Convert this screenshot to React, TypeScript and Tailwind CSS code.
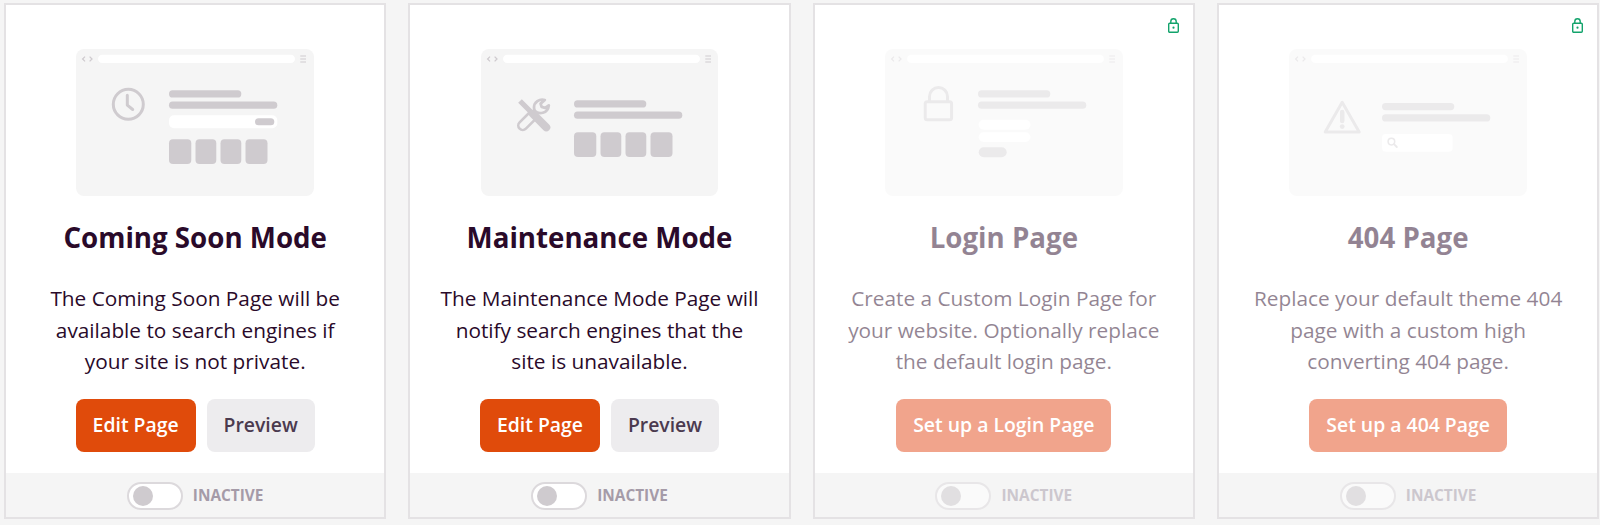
import type { ReactNode } from "react";

const DARK = "#cfcbcf";

function Chrome() {
  return (
    <>
      <rect x="22" y="5.7" width="197" height="8.4" rx="4.2" fill="#fff" />
      <path d="M9 7.6 6.6 10l2.4 2.4M13.6 7.6 16 10l-2.4 2.4" fill="none" stroke={DARK} strokeWidth="1.3" />
      <path d="M224.3 7h5.7M224.3 10h5.7M224.3 13h5.7" fill="none" stroke={DARK} strokeWidth="1.2" />
    </>
  );
}

function Lines({ y }: { y: number }) {
  return (
    <>
      <rect x="93" y={y} width="72.3" height="7.2" rx="3.6" fill={DARK} />
      <rect x="93" y={y + 11.3} width="108.3" height="7.2" rx="3.6" fill={DARK} />
    </>
  );
}

function Squares({ y }: { y: number }) {
  return (
    <>
      <rect x="93" y={y} width="22.3" height="24.7" rx="4" fill={DARK} />
      <rect x="119.5" y={y} width="20.8" height="24.7" rx="4" fill={DARK} />
      <rect x="144.5" y={y} width="20.8" height="24.7" rx="4" fill={DARK} />
      <rect x="169.5" y={y} width="22" height="24.7" rx="4" fill={DARK} />
    </>
  );
}

function Mock({ children }: { children: ReactNode }) {
  return (
    <svg width="237.5" height="147" viewBox="0 0 237.5 147" className="block rounded-lg bg-[#f5f5f5]">
      <Chrome />
      {children}
    </svg>
  );
}

function ClockMock() {
  return (
    <Mock>
      <circle cx="52.3" cy="55.3" r="15" fill="none" stroke={DARK} strokeWidth="3" />
      <path d="M51.3 46.3v9.8l5.4 4.4" fill="none" stroke={DARK} strokeWidth="3" strokeLinecap="round" strokeLinejoin="round" />
      <Lines y={41.3} />
      <rect x="93" y="66.3" width="108.3" height="13" rx="5" fill="#fff" />
      <rect x="179" y="69.3" width="19.3" height="7" rx="3.5" fill={DARK} />
      <Squares y={90.3} />
    </Mock>
  );
}

function ToolsMock() {
  return (
    <Mock>
      <path d="M49.5 62.5 38.6 73.4a4.4 4.4 0 0 0 6.3 6.3L56 68.6" fill="none" stroke={DARK} strokeWidth="2.6" />
      <path d="M39 52 53 66" fill="none" stroke={DARK} strokeWidth="5.2" />
      <path d="M52 65 65.3 78.3" fill="none" stroke={DARK} strokeWidth="8" strokeLinecap="round" />
      <path
        d="M63.8 51C58.5 49.4 53 53 53 58.5c0 1.3.3 2.5 1 3.6 3.6 3.6 12.8 2.8 13.8-5.8l-3.6 2.6-3.6-1-1-3.3z"
        fill="none"
        stroke={DARK}
        strokeWidth="2.8"
        strokeLinejoin="round"
      />
      <Lines y={51.3} />
      <Squares y={83.3} />
    </Mock>
  );
}

function LockMock() {
  return (
    <Mock>
      <rect x="40.2" y="52.8" width="26.4" height="18" rx="2" fill="none" stroke={DARK} strokeWidth="3" />
      <path d="M44.5 52v-4.5a9 9 0 0 1 18 0V52" fill="none" stroke={DARK} strokeWidth="3" />
      <Lines y={41.3} />
      <rect x="93.7" y="70.7" width="51.7" height="10" rx="5" fill="#fff" />
      <rect x="93.7" y="83.3" width="51.7" height="9.7" rx="4.8" fill="#fff" />
      <rect x="93.7" y="98.3" width="28" height="10" rx="5" fill={DARK} />
    </Mock>
  );
}

function WarnMock() {
  return (
    <Mock>
      <path d="M53.2 53.3 36.2 83h34z" fill="none" stroke={DARK} strokeWidth="3" strokeLinejoin="round" />
      <path d="M53.2 63v9" fill="none" stroke={DARK} strokeWidth="4.5" strokeLinecap="round" />
      <circle cx="53.2" cy="77.6" r="2.4" fill={DARK} />
      <Lines y={54} />
      <rect x="93" y="85" width="70.7" height="17.7" rx="4" fill="#fff" />
      <circle cx="102.4" cy="92.6" r="3.3" fill="none" stroke={DARK} strokeWidth="1.5" />
      <path d="m105 95.2 2.8 2.8" fill="none" stroke={DARK} strokeWidth="1.8" strokeLinecap="round" />
    </Mock>
  );
}

function ProLock() {
  return (
    <svg width="11" height="15" viewBox="0 0 11 15" className="absolute right-[14px] top-[13px]">
      <rect x="0.7" y="5.2" width="9.6" height="9" rx="1" fill="none" stroke="#12a36b" strokeWidth="1.4" />
      <path d="M2.8 5V3.4a2.7 2.7 0 0 1 5.4 0V5" fill="none" stroke="#12a36b" strokeWidth="1.4" />
      <circle cx="5.5" cy="9.7" r="1.1" fill="#12a36b" />
    </svg>
  );
}

type CardProps = {
  mock: ReactNode;
  title: string;
  lines: string[];
  primary: string;
  primaryW: string;
  preview?: boolean;
  locked?: boolean;
};

function Card({ mock, title, lines, primary, primaryW, preview, locked }: CardProps) {
  const fade = locked ? "opacity-50" : "";
  const primaryBg = locked ? "bg-[#f1a48c]" : "bg-[#e04b0b]";
  return (
    <div className="relative flex h-[516px] w-[382.33px] shrink-0 flex-col border-2 border-[#e4e2e4] bg-white">
      {locked && <ProLock />}
      <div className="flex flex-1 flex-col items-center pt-[44px]">
        <div className={locked ? "opacity-40" : ""}>{mock}</div>
        <h2 className={`mt-[23px] text-[27.7px] font-bold leading-[36px] text-[#2a0a2a] ${fade}`}>{title}</h2>
        <p className={`mt-[28px] text-center text-[20.8px] leading-[31.5px] text-[#2a0a2a] ${fade}`}>
          {lines.map((l) => (
            <span key={l} className="block">{l}</span>
          ))}
        </p>
        <div className="mt-[21.5px] flex gap-[11px]">
          <span className={`flex h-[53px] items-center justify-center rounded-lg pb-[1px] text-[19.4px] font-semibold text-white ${primaryBg} ${primaryW}`}>
            {primary}
          </span>
          {preview && (
            <span className="flex h-[53px] w-[108px] items-center justify-center rounded-lg bg-[#edecee] pb-[1px] text-[19.4px] font-semibold text-[#4b3a4f]">
              Preview
            </span>
          )}
        </div>
      </div>
      <div className="flex h-[44px] items-center justify-center bg-[#f5f5f5] pt-[1px]">
        <div className={`flex items-center gap-[10px] ${fade}`}>
          <span className="flex h-[28px] w-[56px] items-center rounded-full border-2 border-[#dcd9dc] bg-white pl-[4px]">
            <span className="h-[20px] w-[20px] rounded-full bg-[#cfcbcf]" />
          </span>
          <span className="mt-[1px] text-[15.4px] font-bold leading-none text-[#a59ba8]">INACTIVE</span>
        </div>
      </div>
    </div>
  );
}

export default function App() {
  return (
    <div className="flex h-[525px] gap-[22px] overflow-hidden bg-[#f5f5f5] pl-[4px] pt-[3px] font-['Open_Sans',sans-serif]">
      <Card
        mock={<ClockMock />}
        title="Coming Soon Mode"
        lines={["The Coming Soon Page will be", "available to search engines if", "your site is not private."]}
        primary="Edit Page"
        primaryW="w-[120px]"
        preview
      />
      <Card
        mock={<ToolsMock />}
        title="Maintenance Mode"
        lines={["The Maintenance Mode Page will", "notify search engines that the", "site is unavailable."]}
        primary="Edit Page"
        primaryW="w-[120px]"
        preview
      />
      <Card
        mock={<LockMock />}
        title="Login Page"
        lines={["Create a Custom Login Page for", "your website. Optionally replace", "the default login page."]}
        primary="Set up a Login Page"
        primaryW="w-[215px]"
        locked
      />
      <Card
        mock={<WarnMock />}
        title="404 Page"
        lines={["Replace your default theme 404", "page with a custom high", "converting 404 page."]}
        primary="Set up a 404 Page"
        primaryW="w-[198px]"
        locked
      />
    </div>
  );
}
